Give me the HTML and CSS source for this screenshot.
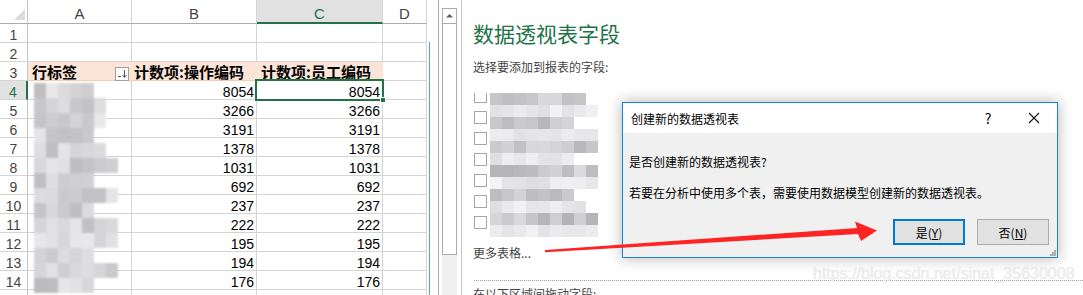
FILE: index.html
```html
<!DOCTYPE html>
<html lang="zh-CN">
<head>
    <meta charset="UTF-8">
    <title>创建新的数据透视表</title>
    <link rel="stylesheet" href="styles.css">
</head>
<body>
    <div class="app">
        <!-- Hoja de cálculo -->
        <div class="sheet">
            <div class="grid">
                <div class="row row-head">
                    <div class="cell corner">
                        <svg width="28" height="24"><polygon points="25,9 25,20 14,20" fill="#dcdcdc"/></svg>
                    </div>
                    <div class="cell col-a ch">A</div>
                    <div class="cell col-b ch">B</div>
                    <div class="cell col-c ch ch-sel">C</div>
                    <div class="cell col-d ch">D</div>
                </div>
                <div class="row"><div class="cell rh">1</div><div class="cell col-a"></div><div class="cell col-b"></div><div class="cell col-c"></div><div class="cell col-d"></div></div>
                <div class="row"><div class="cell rh">2</div><div class="cell col-a"></div><div class="cell col-b"></div><div class="cell col-c"></div><div class="cell col-d"></div></div>
                <div class="row">
                    <div class="cell rh">3</div>
                    <div class="cell col-a pivot-head">
                        <span>行标签</span>
                        <span class="filter-btn">
                            <svg width="12" height="12"><path d="M2 8.5h3" stroke="#555"/><path d="M8.5 2v7" stroke="#555"/><path d="M6.5 7l2 2.5 2-2.5" stroke="#555" fill="none"/></svg>
                        </span>
                    </div>
                    <div class="cell col-b pivot-head">计数项:操作编码</div>
                    <div class="cell col-c pivot-head">计数项:员工编码</div>
                    <div class="cell col-d"></div>
                </div>
                <div class="row"><div class="cell rh rh-sel">4</div><div class="cell col-a"></div><div class="cell col-b num">8054</div><div class="cell col-c num active">8054<span class="sel-box"><span class="fill-handle"></span></span></div><div class="cell col-d"></div></div>
                <div class="row"><div class="cell rh">5</div><div class="cell col-a"></div><div class="cell col-b num">3266</div><div class="cell col-c num">3266</div><div class="cell col-d"></div></div>
                <div class="row"><div class="cell rh">6</div><div class="cell col-a"></div><div class="cell col-b num">3191</div><div class="cell col-c num">3191</div><div class="cell col-d"></div></div>
                <div class="row"><div class="cell rh">7</div><div class="cell col-a"></div><div class="cell col-b num">1378</div><div class="cell col-c num">1378</div><div class="cell col-d"></div></div>
                <div class="row"><div class="cell rh">8</div><div class="cell col-a"></div><div class="cell col-b num">1031</div><div class="cell col-c num">1031</div><div class="cell col-d"></div></div>
                <div class="row"><div class="cell rh">9</div><div class="cell col-a"></div><div class="cell col-b num">692</div><div class="cell col-c num">692</div><div class="cell col-d"></div></div>
                <div class="row"><div class="cell rh">10</div><div class="cell col-a"></div><div class="cell col-b num">237</div><div class="cell col-c num">237</div><div class="cell col-d"></div></div>
                <div class="row"><div class="cell rh">11</div><div class="cell col-a"></div><div class="cell col-b num">222</div><div class="cell col-c num">222</div><div class="cell col-d"></div></div>
                <div class="row"><div class="cell rh">12</div><div class="cell col-a"></div><div class="cell col-b num">195</div><div class="cell col-c num">195</div><div class="cell col-d"></div></div>
                <div class="row"><div class="cell rh">13</div><div class="cell col-a"></div><div class="cell col-b num">194</div><div class="cell col-c num">194</div><div class="cell col-d"></div></div>
                <div class="row"><div class="cell rh">14</div><div class="cell col-a"></div><div class="cell col-b num">176</div><div class="cell col-c num">176</div><div class="cell col-d"></div></div>
                <div class="row row-last"><div class="cell rh"></div><div class="cell col-a"></div><div class="cell col-b"></div><div class="cell col-c"></div><div class="cell col-d"></div></div>
            </div>
            <div class="sheet-edge"><div class="edge-line"></div></div>
            <svg class="blur-a" id="blur-a" width="92" height="212"></svg>
        </div>

        <!-- Barra de desplazamiento -->
        <div class="vscroll">
            <div class="sb">
                <div class="sb-btn"><svg width="13" height="14"><polygon points="3,8.5 6.5,5 10,8.5" fill="#606060"/></svg></div>
            </div>
            <div class="sb-track"></div>
        </div>

        <!-- Panel de campos -->
        <div class="panel">
            <div class="panel-title">数据透视表字段</div>
            <div class="panel-sub">选择要添加到报表的字段:</div>
            <div class="fields">
                <div class="field-list">
                    <div class="field"><span class="cb"></span></div>
                    <div class="field"><span class="cb"></span></div>
                    <div class="field"><span class="cb"></span></div>
                    <div class="field"><span class="cb"></span></div>
                    <div class="field"><span class="cb"></span></div>
                    <div class="field"><span class="cb"></span></div>
                    <div class="field"><span class="cb"></span></div>
                </div>
                <svg class="blur-f" id="blur-f" width="115" height="144"></svg>
            </div>
            <div class="more">更多表格...</div>
            <div class="dotted"></div>
            <div class="drag">在以下区域间拖动字段:</div>
        </div>
    </div>

    <!-- Diálogo -->
    <div class="dialog">
        <div class="dlg-title">
            <span class="dlg-caption">创建新的数据透视表</span>
            <span class="dlg-tbtn">?</span>
            <span class="dlg-tbtn">
                <svg width="12" height="12"><path d="M1 1L11 11M11 1L1 11" stroke="#111" stroke-width="1.1"/></svg>
            </span>
        </div>
        <div class="dlg-body">
            <p class="dlg-q">是否创建新的数据透视表?</p>
            <p class="dlg-info">若要在分析中使用多个表，需要使用数据模型创建新的数据透视表。</p>
            <div class="dlg-buttons">
                <button class="btn btn-default">是(<u>Y</u>)</button>
                <button class="btn">否(<u>N</u>)</button>
            </div>
        </div>
        <svg class="grip" width="7" height="7">
            <rect x="5" y="1" width="2" height="2" fill="#b0b0b0"/>
            <rect x="3" y="3" width="2" height="2" fill="#b0b0b0"/>
            <rect x="5" y="3" width="2" height="2" fill="#b0b0b0"/>
            <rect x="1" y="5" width="2" height="2" fill="#b0b0b0"/>
            <rect x="3" y="5" width="2" height="2" fill="#b0b0b0"/>
            <rect x="5" y="5" width="2" height="2" fill="#b0b0b0"/>
        </svg>
    </div>

    <svg class="arrow" width="1083" height="295">
        <polygon points="545,250 857,228 855,221.5 877,230.5 861,241 858,234 545,252.2" fill="#ff2424"/>
    </svg>

    <div class="watermark">https://blog.csdn.net/sinat_35630008</div>

    <script src="script.js"></script>
</body>
</html>
```

FILE: styles.css
```css
* {
    box-sizing: border-box;
}

html {
    overflow: hidden;
}

body {
    margin: 0;
    width: 1083px;
    height: 295px;
    overflow: hidden;
    background: #fff;
    font-family: "Noto Sans CJK SC", sans-serif;
    position: relative;
}

.app {
    display: flex;
    height: 295px;
    overflow: hidden;
}

/* Hoja */
.sheet {
    display: flex;
    position: relative;
    font-family: "Liberation Sans", "Noto Sans CJK SC", sans-serif;
    font-size: 14px;
    color: #000;
}

.grid {
    width: 427px;
}

.row {
    display: flex;
    height: 19px;
}

.row-head {
    height: 24px;
}

.row-last {
    height: 5px;
}

.cell {
    height: 100%;
    border-right: 1px solid #d4d4d4;
    border-bottom: 1px solid #d4d4d4;
    line-height: 18px;
    padding-top: 2px;
    white-space: nowrap;
}

.row-last .cell {
    border-bottom: none;
    padding-top: 0;
}

.rh, .corner { width: 28px; }
.col-a { width: 104px; }
.col-b { width: 125px; }
.col-c { width: 126px; }
.col-d { width: 44px; }

.corner {
    padding: 0;
    border-right-color: #c6c6c6;
    border-bottom-color: #ababab;
}

.corner svg {
    display: block;
}

.rh {
    text-align: center;
    color: #444;
    border-right-color: #c6c6c6;
}

.rh-sel {
    background: #e1e1e1;
    color: #217346;
    border-right: 2px solid #217346;
}

.ch {
    text-align: center;
    color: #444;
    font-size: 15px;
    padding-top: 5px;
    border-bottom-color: #ababab;
}

.ch-sel {
    background: #e1e1e1;
    color: #217346;
    border-bottom: 2px solid #217346;
}

.pivot-head {
    background: #fce4d6;
    border-right-color: #fce4d6;
    border-bottom-color: #f8cbad;
    font-family: "Noto Sans CJK SC", sans-serif;
    font-size: 15px;
    font-weight: bold;
    padding-left: 4px;
    padding-top: 1px;
}

.col-a.pivot-head {
    display: flex;
    align-items: flex-start;
    justify-content: space-between;
    padding-right: 2px;
}

.col-b.pivot-head {
    padding-left: 2px;
}

.filter-btn {
    width: 14px;
    height: 14px;
    margin-top: 4px;
    border: 1px solid #a0a0a0;
    background: #fff;
    display: flex;
    align-items: center;
    justify-content: center;
}

.num {
    text-align: right;
    padding-right: 2px;
}

.active {
    position: relative;
}

.sel-box {
    position: absolute;
    left: -2px;
    top: -2px;
    right: -2px;
    bottom: -2px;
    border: 2px solid #217346;
}

.fill-handle {
    position: absolute;
    right: -4px;
    bottom: -4px;
    width: 6px;
    height: 6px;
    background: #217346;
    border: 1px solid #fff;
}

.sheet-edge {
    width: 12px;
    border-right: 1px solid #ababab;
    padding-left: 2px;
    padding-top: 42px;
}

.edge-line {
    height: 100%;
    border-left: 1px solid #5b9bd5;
}

.blur-a {
    position: absolute;
    left: 30px;
    top: 83px;
    filter: blur(0.8px);
}

/* Barra de desplazamiento */
.vscroll {
    width: 23px;
    padding: 8px 4px 0 3px;
    border-right: 1px solid #c6c6c6;
    display: flex;
    flex-direction: column;
}

.sb {
    height: 247px;
    border: 1px solid #ababab;
    background: #fff;
}

.sb-btn {
    height: 15px;
    border-bottom: 1px solid #ababab;
}

.sb-btn svg {
    display: block;
}

.sb-track {
    flex: 1;
    background: #f0f0f0;
}

/* Panel */
.panel {
    flex: 1;
    padding: 18px 0 0 11px;
    font-size: 12px;
    color: #444;
    overflow: hidden;
}

.panel-title {
    font-size: 21px;
    line-height: 30px;
    color: #217346;
}

.panel-sub {
    margin-top: 10px;
    line-height: 18px;
}

.fields {
    position: relative;
    height: 144px;
    margin-top: 17px;
    overflow: hidden;
}

.field-list {
    margin-top: -3px;
}

.field {
    height: 21px;
    padding-left: 1px;
}

.cb {
    display: block;
    width: 13px;
    height: 13px;
    border: 1px solid #a6a6a6;
    background: #fff;
}

.blur-f {
    position: absolute;
    left: 17px;
    top: 0;
    filter: blur(0.6px);
}

.more {
    margin-top: 7px;
    line-height: 18px;
}

.dotted {
    margin-top: 18px;
    margin-left: 1px;
    border-top: 1px dotted #a0a0a0;
}

.drag {
    margin-top: 4px;
    line-height: 18px;
}

/* Diálogo */
.dialog {
    position: absolute;
    left: 622px;
    top: 102px;
    width: 436px;
    height: 156px;
    border: 1px solid #1883d7;
    background: #f0f0f0;
    box-shadow: 0 0 14px rgba(0, 0, 0, 0.3);
    font-size: 12px;
    color: #000;
}

.dlg-title {
    height: 30px;
    background: #fff;
    display: flex;
    align-items: center;
    padding-left: 8px;
}

.dlg-caption {
    flex: 1;
}

.dlg-tbtn {
    width: 46px;
    height: 30px;
    display: flex;
    align-items: center;
    justify-content: center;
    font-size: 14px;
}

.dlg-body {
    padding: 20px 8px 0 6px;
}

.dlg-body p {
    margin: 0;
    line-height: 18px;
}

.dlg-info {
    margin-top: 13px !important;
}

.dlg-buttons {
    display: flex;
    justify-content: flex-end;
    gap: 12px;
    margin-top: 17px;
}

.btn {
    width: 72px;
    height: 26px;
    border: 1px solid #adadad;
    background: #e1e1e1;
    font-family: "Noto Sans CJK SC", sans-serif;
    font-size: 12px;
    color: #000;
    padding: 0;
}

.btn-default {
    border: 2px solid #0078d7;
}

.grip {
    position: absolute;
    right: 1px;
    bottom: 1px;
}

.arrow {
    position: absolute;
    left: 0;
    top: 0;
    pointer-events: none;
}

.watermark {
    position: absolute;
    left: 813px;
    top: 264px;
    font-family: "Liberation Sans", sans-serif;
    font-size: 16px;
    line-height: 20px;
    color: rgba(240, 240, 240, 0.92);
    text-shadow: 0 0 1px rgba(140, 140, 140, 0.3);
}
```

FILE: script.js
```js
// Mosaico gris para los datos ocultos
function rng(seed) {
    return function () {
        seed = (seed + 0x6D2B79F5) | 0;
        var t = Math.imul(seed ^ (seed >>> 15), 1 | seed);
        t = (t + Math.imul(t ^ (t >>> 7), 61 | t)) ^ t;
        return ((t ^ (t >>> 14)) >>> 0) / 4294967296;
    };
}

function mosaic(id, opts) {
    var svg = document.getElementById(id);
    var rand = rng(opts.seed);
    var html = '';
    for (var r = 0; r < opts.rows; r++) {
        var cols = opts.minCols + Math.floor(rand() * (opts.maxCols - opts.minCols + 1));
        var light = opts.stripes && r % 2 === 1;
        for (var c = 0; c < cols; c++) {
            var g = light ? 222 + rand() * 22 : opts.base + rand() * opts.range;
            g = Math.round(g);
            html += '<rect x="' + (opts.x + c * 12) + '" y="' + (r * opts.h) + '" width="12" height="' + opts.h +
                '" fill="rgb(' + g + ',' + g + ',' + (g + 2) + ')"/>';
        }
    }
    svg.innerHTML = html;
}

mosaic('blur-a', { seed: 7, rows: 14, h: 15, x: 4, minCols: 5, maxCols: 7, base: 188, range: 45, stripes: false });
mosaic('blur-f', { seed: 21, rows: 12, h: 12, x: 0, minCols: 7, maxCols: 9, base: 180, range: 40, stripes: true });
```
